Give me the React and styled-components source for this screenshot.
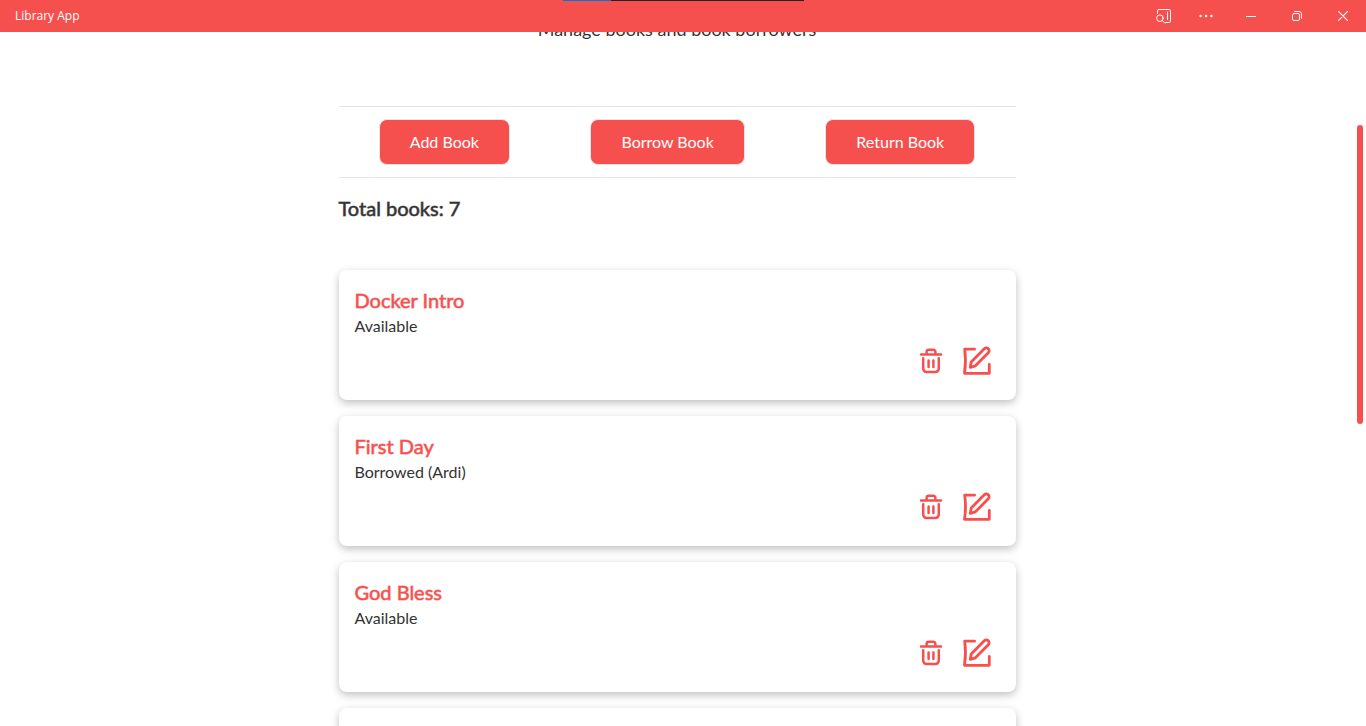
import React from "react";
import styled, { createGlobalStyle } from "styled-components";

const accent = "#f5504e";
const ink = "#333333";

const GlobalStyle = createGlobalStyle`
  * { box-sizing: border-box; }
  body {
    margin: 0;
    background: #fff;
    color: ${ink};
    font-family: Lato, "Noto Sans", sans-serif;
    font-size: 16px;
    line-height: 24px;
  }
  h2, h3, p, ul { margin: 0; padding: 0; }
`;

const Shell = styled.div`
  height: 100vh;
  display: flex;
  flex-direction: column;
  overflow: hidden;
`;

const TitleBar = styled.header`
  position: relative;
  flex: none;
  height: 32px;
  padding-left: 15px;
  display: flex;
  align-items: center;
  justify-content: space-between;
  background: ${accent};
  color: #fff;
  font: 12px/16px "Open Sans", "Noto Sans", sans-serif;
`;

const LoadStrip = styled.div`
  position: absolute;
  top: 0;
  left: 563px;
  width: 241px;
  height: 1px;
  background: linear-gradient(to right, #0078d7 48px, #222 48px);
`;

const WindowControls = styled.div`
  display: flex;
`;

const WindowButton = styled.button`
  width: ${(p) => p.$width}px;
  height: 32px;
  padding: 0;
  border: 0;
  display: grid;
  place-items: center;
  background: transparent;
  color: inherit;
`;

const Viewport = styled.div`
  flex: 1;
  min-height: 0;
  display: flex;
  overflow: hidden;
`;

const Page = styled.main`
  flex: 1;
  min-height: 0;
  overflow: hidden;
`;

const Content = styled.div`
  width: 50%;
  margin: -15px auto 0;
`;

const Subtitle = styled.p`
  font-size: 18px;
  text-align: center;
`;

const Actions = styled.div`
  margin-top: 65px;
  padding: 12px 0;
  display: flex;
  justify-content: space-around;
  border: solid #e6e6e6;
  border-width: 1px 0;
`;

const ActionButton = styled.button`
  height: 46px;
  padding: 0 30px;
  border: 1px solid #e6e6e6;
  border-radius: 8px;
  background: ${accent};
  color: #fff;
  font: inherit;
`;

const Total = styled.h2`
  margin-top: 18px;
  font-size: 20px;
  font-weight: 400;
  line-height: 24px;
  -webkit-text-stroke: 1px ${ink}99;
`;

const BookList = styled.ul`
  margin-top: 50px;
  display: grid;
  gap: 16px;
  list-style: none;
`;

const Card = styled.li`
  height: 130px;
  padding: 18px 24px 24px 16px;
  display: flex;
  flex-direction: column;
  border-radius: 8px;
  background: #fff;
  box-shadow: 0 3px 8px rgba(0, 0, 0, 0.25);
`;

const BookTitle = styled.h3`
  margin-bottom: 2px;
  color: ${accent};
  font-size: 20px;
  font-weight: 400;
  line-height: 24px;
  -webkit-text-stroke: 1px ${accent}99;
`;

const CardActions = styled.div`
  margin-top: auto;
  display: flex;
  justify-content: flex-end;
  align-items: center;
  gap: 16px;
`;

const IconButton = styled.button`
  width: 30px;
  height: 30px;
  padding: 0;
  border: 0;
  display: grid;
  place-items: center;
  background: transparent;
  color: ${accent};
`;

const Track = styled.div`
  flex: none;
  width: 12px;
  padding: 93px 3px 0;
`;

const Thumb = styled.div`
  height: 299px;
  border-radius: 3px;
  background: ${accent};
`;

const stroke = {
  fill: "none",
  stroke: "currentColor",
  strokeLinecap: "round",
  strokeLinejoin: "round",
};

const SearchPanelIcon = () => (
  <svg width="16" height="16" viewBox="0 0 16 16" {...stroke}>
    <path d="M1.5 5.5v-2.500a1.500 1.500 0 0 1 1.500-1.500h10a1.500 1.500 0 0 1 1.500 1.500v10a1.500 1.500 0 0 1-1.500 1.500H9.500M11.500 4v7.500" />
    <circle cx="3.9" cy="10.200" r="3.300" />
    <path d="M6.300 12.600l2.600 2.600" />
  </svg>
);

const DotsIcon = () => (
  <svg width="16" height="16" viewBox="0 0 16 16" fill="currentColor">
    <circle cx="2.6" cy="8" r="1.3" />
    <circle cx="8" cy="8" r="1.3" />
    <circle cx="13.4" cy="8" r="1.3" />
  </svg>
);

const MinimizeIcon = () => (
  <svg width="10" height="10" viewBox="0 0 10 10" {...stroke} strokeLinecap="butt">
    <path d="M0 5.5h10" />
  </svg>
);

const RestoreIcon = () => (
  <svg width="10" height="10" viewBox="0 0 10 10" {...stroke}>
    <rect x="0.5" y="2.5" width="7" height="7" rx="1.5" />
    <path d="M2.7.5h4.3a2.5 2.5 0 0 1 2.5 2.5v4.3" />
  </svg>
);

const CloseIcon = () => (
  <svg width="10" height="10" viewBox="0 0 10 10" {...stroke} strokeWidth="1.1">
    <path d="M.3.3l9.4 9.4M9.7.3L.3 9.7" />
  </svg>
);

const TrashIcon = () => (
  <svg width="24" height="28" viewBox="0 0 24 28" {...stroke} strokeWidth="2.5">
    <path d="M2 7.5h20M7.6 7.2V5A2.2 2.2 0 0 1 9.8 2.8h4.4a2.2 2.2 0 0 1 2.2 2.200v2.200" />
    <path d="M4.2 11.2v10.4a3.4 3.4 0 0 0 3.4 3.4h8.8a3.4 3.4 0 0 0 3.4-3.4V11.2M9.6 13.6v6.4M14.4 13.6v6.4" />
  </svg>
);

const EditIcon = () => (
  <svg width="30" height="30" viewBox="0 0 30 30" {...stroke} strokeWidth="2.8">
    <path d="M12.6 3.2H2.7C3.5 9 3.5 21 2.5 27.3h24.8V18.5" />
    <path d="M8.3 21.4l.9-5.4L22.3 2.8a2.7 2.7 0 0 1 4 0 2.7 2.7 0 0 1 0 3.9L13.4 19.8z" />
  </svg>
);

const books = [
  { title: "Docker Intro", status: "Available" },
  { title: "First Day", status: "Borrowed (Ardi)" },
  { title: "God Bless", status: "Available" },
];

export default function App() {
  return (
    <Shell>
      <GlobalStyle />
      <TitleBar>
        <span>Library App</span>
        <LoadStrip />
        <WindowControls>
          <WindowButton $width={40} aria-label="Search"><SearchPanelIcon /></WindowButton>
          <WindowButton $width={44} aria-label="More"><DotsIcon /></WindowButton>
          <WindowButton $width={46} aria-label="Minimize"><MinimizeIcon /></WindowButton>
          <WindowButton $width={46} aria-label="Restore"><RestoreIcon /></WindowButton>
          <WindowButton $width={46} aria-label="Close"><CloseIcon /></WindowButton>
        </WindowControls>
      </TitleBar>
      <Viewport>
        <Page>
          <Content>
            <Subtitle>Manage books and book borrowers</Subtitle>
            <Actions>
              <ActionButton>Add Book</ActionButton>
              <ActionButton>Borrow Book</ActionButton>
              <ActionButton>Return Book</ActionButton>
            </Actions>
            <Total>Total books: 7</Total>
            <BookList>
              {books.map((book) => (
                <Card key={book.title}>
                  <BookTitle>{book.title}</BookTitle>
                  <p>{book.status}</p>
                  <CardActions>
                    <IconButton aria-label={`Delete ${book.title}`}><TrashIcon /></IconButton>
                    <IconButton aria-label={`Edit ${book.title}`}><EditIcon /></IconButton>
                  </CardActions>
                </Card>
              ))}
              <Card />
            </BookList>
          </Content>
        </Page>
        <Track><Thumb /></Track>
      </Viewport>
    </Shell>
  );
}
